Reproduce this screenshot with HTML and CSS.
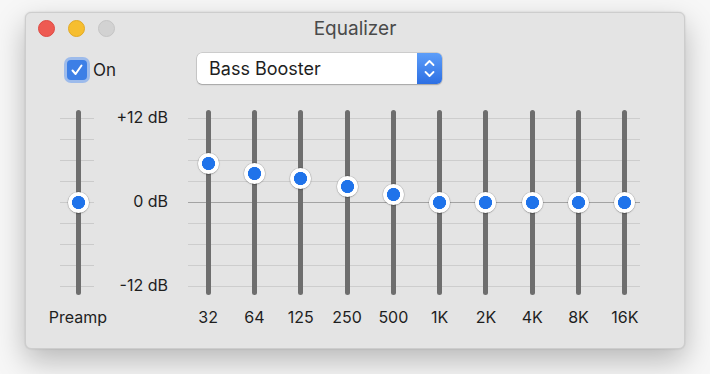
FILE: index.html
```html
<!DOCTYPE html>
<html>
<head>
<meta charset="utf-8">
<title>Equalizer</title>
<link rel="stylesheet" href="styles.css">
</head>
<body>
<div class="window">
  <div class="titlebar">
    <div class="lights">
      <span class="light red"></span>
      <span class="light yellow"></span>
      <span class="light gray"></span>
    </div>
    <div class="title">Equalizer</div>
    <div class="spacer"></div>
  </div>
  <div class="controls">
    <label class="check">
      <span class="box"><svg viewBox="0 0 20 20" width="20" height="20"><path d="M5.5 10.5 L8.6 14 L14.5 5.5" fill="none" stroke="#fff" stroke-width="2" stroke-linecap="round" stroke-linejoin="round"/></svg></span>
      <span class="check-label">On</span>
    </label>
    <div class="select">
      <span class="select-text">Bass Booster</span>
      <span class="select-btn"><svg viewBox="0 0 25 31" width="25" height="31"><path d="M8.5 12 L12.5 8 L16.5 12 M8.5 19 L12.5 23 L16.5 19" fill="none" stroke="#fff" stroke-width="1.8" stroke-linecap="round" stroke-linejoin="round"/></svg></span>
    </div>
  </div>
  <div class="eq">
    <div class="col preamp">
      <div class="track-area"><div class="track"></div><div class="knob" style="top:92px"></div></div>
      <div class="lbl">Preamp</div>
    </div>
    <div class="scale">
      <span>+12 dB</span>
      <span>0 dB</span>
      <span>-12 dB</span>
    </div>
    <div class="bands">
      <div class="col"><div class="track-area"><div class="track"></div><div class="knob" style="top:53px"></div></div><div class="lbl">32</div></div>
      <div class="col"><div class="track-area"><div class="track"></div><div class="knob" style="top:63px"></div></div><div class="lbl">64</div></div>
      <div class="col"><div class="track-area"><div class="track"></div><div class="knob" style="top:68px"></div></div><div class="lbl">125</div></div>
      <div class="col"><div class="track-area"><div class="track"></div><div class="knob" style="top:76px"></div></div><div class="lbl">250</div></div>
      <div class="col"><div class="track-area"><div class="track"></div><div class="knob" style="top:84px"></div></div><div class="lbl">500</div></div>
      <div class="col"><div class="track-area"><div class="track"></div><div class="knob" style="top:92px"></div></div><div class="lbl">1K</div></div>
      <div class="col"><div class="track-area"><div class="track"></div><div class="knob" style="top:92px"></div></div><div class="lbl">2K</div></div>
      <div class="col"><div class="track-area"><div class="track"></div><div class="knob" style="top:92px"></div></div><div class="lbl">4K</div></div>
      <div class="col"><div class="track-area"><div class="track"></div><div class="knob" style="top:92px"></div></div><div class="lbl">8K</div></div>
      <div class="col"><div class="track-area"><div class="track"></div><div class="knob" style="top:92px"></div></div><div class="lbl">16K</div></div>
    </div>
  </div>
</div>
</body>
</html>
```

FILE: styles.css
```css
html, body {
  margin: 0;
  padding: 0;
}
body {
  background: #f7f7f7;
  font-family: "Inter", "Liberation Sans", Arial, sans-serif;
  color: #1e1e1e;
  padding: 12px 0 0 25px;
  height: 374px;
  box-sizing: border-box;
  overflow: hidden;
}
.window {
  width: 660px;
  height: 337px;
  box-sizing: border-box;
  background: #e4e4e4;
  border: 1px solid #cdcdcd;
  border-radius: 6px;
  box-shadow: 0 12px 30px rgba(0, 0, 0, 0.26), 0 0 2px rgba(0, 0, 0, 0.15);
  display: flex;
  flex-direction: column;
}
.titlebar {
  height: 31px;
  display: grid;
  grid-template-columns: 1fr auto 1fr;
  align-items: center;
  padding: 0 12px;
}
.lights {
  display: flex;
  gap: 13px;
}
.light {
  width: 17px;
  height: 17px;
  border-radius: 50%;
  box-sizing: border-box;
}
.red { background: #ee5a52; border: 1px solid #de4a43; }
.yellow { background: #f6be2f; border: 1px solid #e2a925; }
.gray { background: #d2d2d2; border: 1px solid #c5c5c5; }
.title {
  font-size: 19px;
  color: #4a4a4a;
}
.controls {
  display: flex;
  align-items: center;
  margin-top: 9px;
  height: 31px;
  padding-left: 41px;
}
.check {
  display: flex;
  align-items: center;
  gap: 6px;
  width: 130px;
  margin-top: 2px;
}
.box {
  width: 20px;
  height: 20px;
  border-radius: 4px;
  background: #3d7fe6;
  box-shadow: 0 0 0 3px rgba(110, 160, 240, 0.6);
  display: block;
}
.box svg { display: block; }
.check-label {
  font-size: 17px;
  color: #1e1e1e;
}
.select {
  width: 245px;
  height: 31px;
  box-sizing: border-box;
  background: #fff;
  border-radius: 5px;
  box-shadow: 0 0 0 0.5px rgba(0, 0, 0, 0.2), 0 1px 1.5px rgba(0, 0, 0, 0.2);
  display: flex;
  align-items: center;
  justify-content: space-between;
  overflow: hidden;
}
.select-text {
  font-size: 18px;
  color: #1e1e1e;
  padding-left: 12px;
}
.select-btn {
  width: 25px;
  height: 31px;
  background: linear-gradient(#5d9ef9, #2d6fe3);
  display: block;
}
.select-btn svg { display: block; }
.eq {
  display: flex;
  margin-top: 26px;
  padding-left: 21px;
}
.col {
  display: flex;
  flex-direction: column;
  align-items: center;
}
.preamp {
  width: 62px;
  background-image:
    repeating-linear-gradient(to bottom, #cbcbcb 0 1px, transparent 1px 21px);
  background-size: 34px 169px;
  background-position: 13px 8px;
  background-repeat: no-repeat;
}
.track-area {
  position: relative;
  width: 24px;
  height: 185px;
  display: flex;
  justify-content: center;
}
.track {
  width: 5px;
  height: 185px;
  border-radius: 2.5px;
  background: #6e6e6e;
}
.knob {
  position: absolute;
  left: 50%;
  width: 21px;
  height: 21px;
  margin: -10.5px 0 0 -10.5px;
  border-radius: 50%;
  background: radial-gradient(circle, #1f73ea 0 6.3px, #ffffff 6.8px);
  box-shadow: 0 0.5px 1.5px rgba(0, 0, 0, 0.35), 0 0 0 0.5px rgba(0, 0, 0, 0.12);
}
.lbl {
  font-size: 16px;
  line-height: 18px;
  margin-top: 13px;
  color: #1e1e1e;
}
.scale {
  width: 61px;
  height: 186px;
  margin-top: -2px;
  display: flex;
  flex-direction: column;
  justify-content: space-between;
  align-items: flex-end;
  font-size: 16px;
  line-height: 18px;
  padding-right: 2px;
  box-sizing: border-box;
}
.bands {
  margin-left: 15px;
  display: flex;
  width: 463px;
  background-image:
    linear-gradient(#a3a3a3, #a3a3a3),
    repeating-linear-gradient(to bottom, #cdcdcd 0 1px, transparent 1px 21px);
  background-size: 452px 1px, 452px 169px;
  background-position: 3px 92px, 3px 8px;
  background-repeat: no-repeat;
  align-self: flex-start;
}
.bands .col {
  flex: 1;
}
```
